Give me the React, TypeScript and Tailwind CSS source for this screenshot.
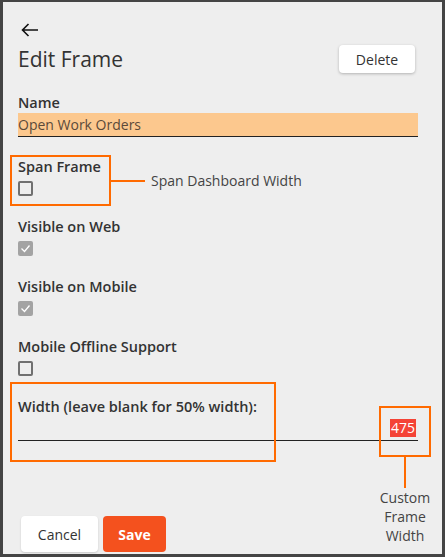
const font = { fontFamily: '"Open Sans", "Noto Sans", sans-serif' }

function Checkbox({ checked }: { checked?: boolean }) {
  if (checked) {
    return (
      <div className="mt-[5px] w-[15px] h-[15px] rounded-[2px] bg-[#a3a3a3] flex items-center justify-center">
        <svg width="11" height="9" viewBox="0 0 11 9" fill="none">
          <path d="M1.5 4.5l3 3 5-6" stroke="#fff" strokeWidth="1.3" />
        </svg>
      </div>
    )
  }
  return <div className="mt-[5px] w-[15px] h-[15px] rounded-[2px] border-2 border-[#707070]" />
}

function CheckField({ label, checked, first }: { label: string; checked?: boolean; first?: boolean }) {
  return (
    <div className={first ? 'mt-[20px]' : 'mt-[21px]'}>
      <div className="text-[14.5px] leading-[19px] font-semibold text-[#333]">{label}</div>
      <Checkbox checked={checked} />
    </div>
  )
}

export default function App() {
  return (
    <div className="relative w-[445px] h-[557px] bg-[#eeeeee]" style={font}>
      <div className="h-full box-border flex flex-col border-t-2 border-l-[3px] border-r-[3px] border-b-[3px] border-[#444] pt-[21px] pl-[15px] pr-[24px] pb-[2px]">
        {/* Back arrow */}
        <svg className="ml-[3px]" width="18" height="14" viewBox="0 0 18 14" fill="none">
          <path d="M17 7H1.5M7.5 1L1.5 7l6 6" stroke="#111" strokeWidth="1.6" />
        </svg>

        {/* Header */}
        <div className="mt-[8px] h-[28px] flex items-center justify-between">
          <h1 className="text-[21px] leading-[28px] text-[#333]">Edit Frame</h1>
          <button className="mr-[3px] w-[76px] h-[28px] bg-white rounded-[4px] shadow-[0_1px_3px_rgba(0,0,0,0.25)] text-[14px] text-[#333]">
            Delete
          </button>
        </div>

        {/* Name */}
        <div className="mt-[20px] text-[14.5px] leading-[19px] font-semibold text-[#333]">Name</div>
        <div className="mt-[1px] bg-[#fcc88e] border-b border-[#222] text-[14px] leading-[23px] text-[#5b4a3a]">
          Open Work Orders
        </div>

        <CheckField label="Span Frame" first />
        <CheckField label="Visible on Web" checked />
        <CheckField label="Visible on Mobile" checked />
        <CheckField label="Mobile Offline Support" />

        {/* Width */}
        <div className="mt-[21px] text-[14.5px] leading-[19px] font-semibold text-[#333]">
          Width (leave blank for 50% width):
        </div>
        <div className="mt-[3px] pb-[3px] pr-[2px] flex justify-end border-b border-[#222]">
          <span className="bg-[#f44336] text-white text-[14px] leading-[18px] px-[1px]">475</span>
        </div>

        {/* Actions */}
        <div className="mt-auto flex gap-[5px] pl-[3px]">
          <button className="w-[77px] h-[36px] bg-white rounded-[4px] shadow-[0_1px_2px_rgba(0,0,0,0.15)] text-[14px] text-[#333]">
            Cancel
          </button>
          <button className="w-[63px] h-[36px] bg-[#f4511e] rounded-[4px] text-[14px] font-bold text-white">
            Save
          </button>
        </div>
      </div>

      {/* Annotation callouts */}
      <div className="absolute left-[10px] top-[155px] w-[101px] h-[51px] border-2 border-[#ff6a00]" />
      <div className="absolute left-[111px] top-[180px] w-[34px] h-[2px] bg-[#ff6a00]" />
      <div className="absolute left-[151px] top-[171px] text-[14px] leading-[19px] text-[#444]">Span Dashboard Width</div>

      <div className="absolute left-[10px] top-[382px] w-[266px] h-[80px] border-2 border-[#ff6a00]" />

      <div className="absolute left-[379px] top-[406px] w-[52px] h-[51px] border-2 border-[#ff6a00]" />
      <div className="absolute left-[404px] top-[457px] w-[2px] h-[31px] bg-[#ff6a00]" />
      <div className="absolute left-[365px] top-[488px] w-[80px] text-center text-[14px] leading-[19px] text-[#444]">
        Custom
        <br />
        Frame
        <br />
        Width
      </div>
    </div>
  )
}
